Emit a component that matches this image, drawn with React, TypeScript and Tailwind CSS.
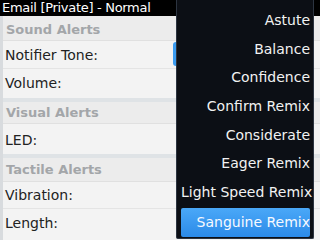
export default function App() {
  const tones = [
    "Astute",
    "Balance",
    "Confidence",
    "Confirm Remix",
    "Considerate",
    "Eager Remix",
    "Light Speed Remix",
  ];

  return (
    <div
      className="relative w-[320px] h-[240px] overflow-hidden bg-[#f0f0f0]"
      style={{ fontFamily: '"DejaVu Sans", sans-serif' }}
    >
      {/* title bar */}
      <div className="h-[16px] bg-black text-white text-[13px] leading-[15px] tracking-[-0.3px] pl-[2px] whitespace-nowrap">
        Email [Private] - Normal
      </div>

      {/* settings list */}
      <div className="border-l-[3px] border-[#d8dbde]">
        <div className="h-[25px] bg-[#ececec] border-b border-[#e0e0e0] pl-[3px] text-[13px] font-bold text-[#a3a6a9] leading-[27px]">
          Sound Alerts
        </div>
        <div className="relative h-[28px] bg-[#f3f3f3] border-b border-[#e4e4e4] pl-[2px] text-[14px] text-[#222] leading-[28px]">
          Notifier Tone:
          <div className="absolute left-[170px] top-[1px] w-[10px] h-[24px] rounded-[3px] bg-[#3a9bf0]" />
        </div>
        <div className="h-[33px] bg-[#f3f3f3] border-b-[4px] border-[#dfe3e6] pl-[2px] text-[14px] text-[#222] leading-[28px]">
          Volume:
        </div>
        <div className="h-[22px] bg-[#ececec] border-b border-[#e0e0e0] pl-[3px] text-[13px] font-bold text-[#a3a6a9] leading-[22px]">
          Visual Alerts
        </div>
        <div className="h-[34px] bg-[#f3f3f3] border-b-[4px] border-[#dfe3e6] pl-[2px] text-[14px] text-[#222] leading-[32px]">
          LED:
        </div>
        <div className="h-[24px] bg-[#ececec] border-b border-[#e0e0e0] pl-[3px] text-[13px] font-bold text-[#a3a6a9] leading-[24px]">
          Tactile Alerts
        </div>
        <div className="h-[27px] bg-[#f3f3f3] border-b border-[#e4e4e4] pl-[2px] text-[14px] text-[#222] leading-[26px]">
          Vibration:
        </div>
        <div className="h-[31px] bg-[#f3f3f3] pl-[2px] text-[14px] text-[#222] leading-[28px]">
          Length:
        </div>
      </div>

      {/* tone menu */}
      <div className="absolute left-[176px] top-0 w-[138px] h-[239px] bg-[#0c0f15] border border-[#2c3440] border-t-0 rounded-b-[2px] flex flex-col items-stretch pt-[6px] pl-[4px] pr-[3px]">
        {tones.map((t) => (
          <div
            key={t}
            className="h-[28.7px] text-right text-[14px] leading-[28px] text-[#f2f2f2] whitespace-nowrap"
          >
            {t}
          </div>
        ))}
        <div className="mt-[1px] h-[29px] rounded-[2px] bg-gradient-to-b from-[#4aa8f8] to-[#2b8ae8] text-right text-[14px] leading-[28px] text-[#f6f9ff] whitespace-nowrap">
          Sanguine Remix
        </div>
      </div>
    </div>
  );
}
